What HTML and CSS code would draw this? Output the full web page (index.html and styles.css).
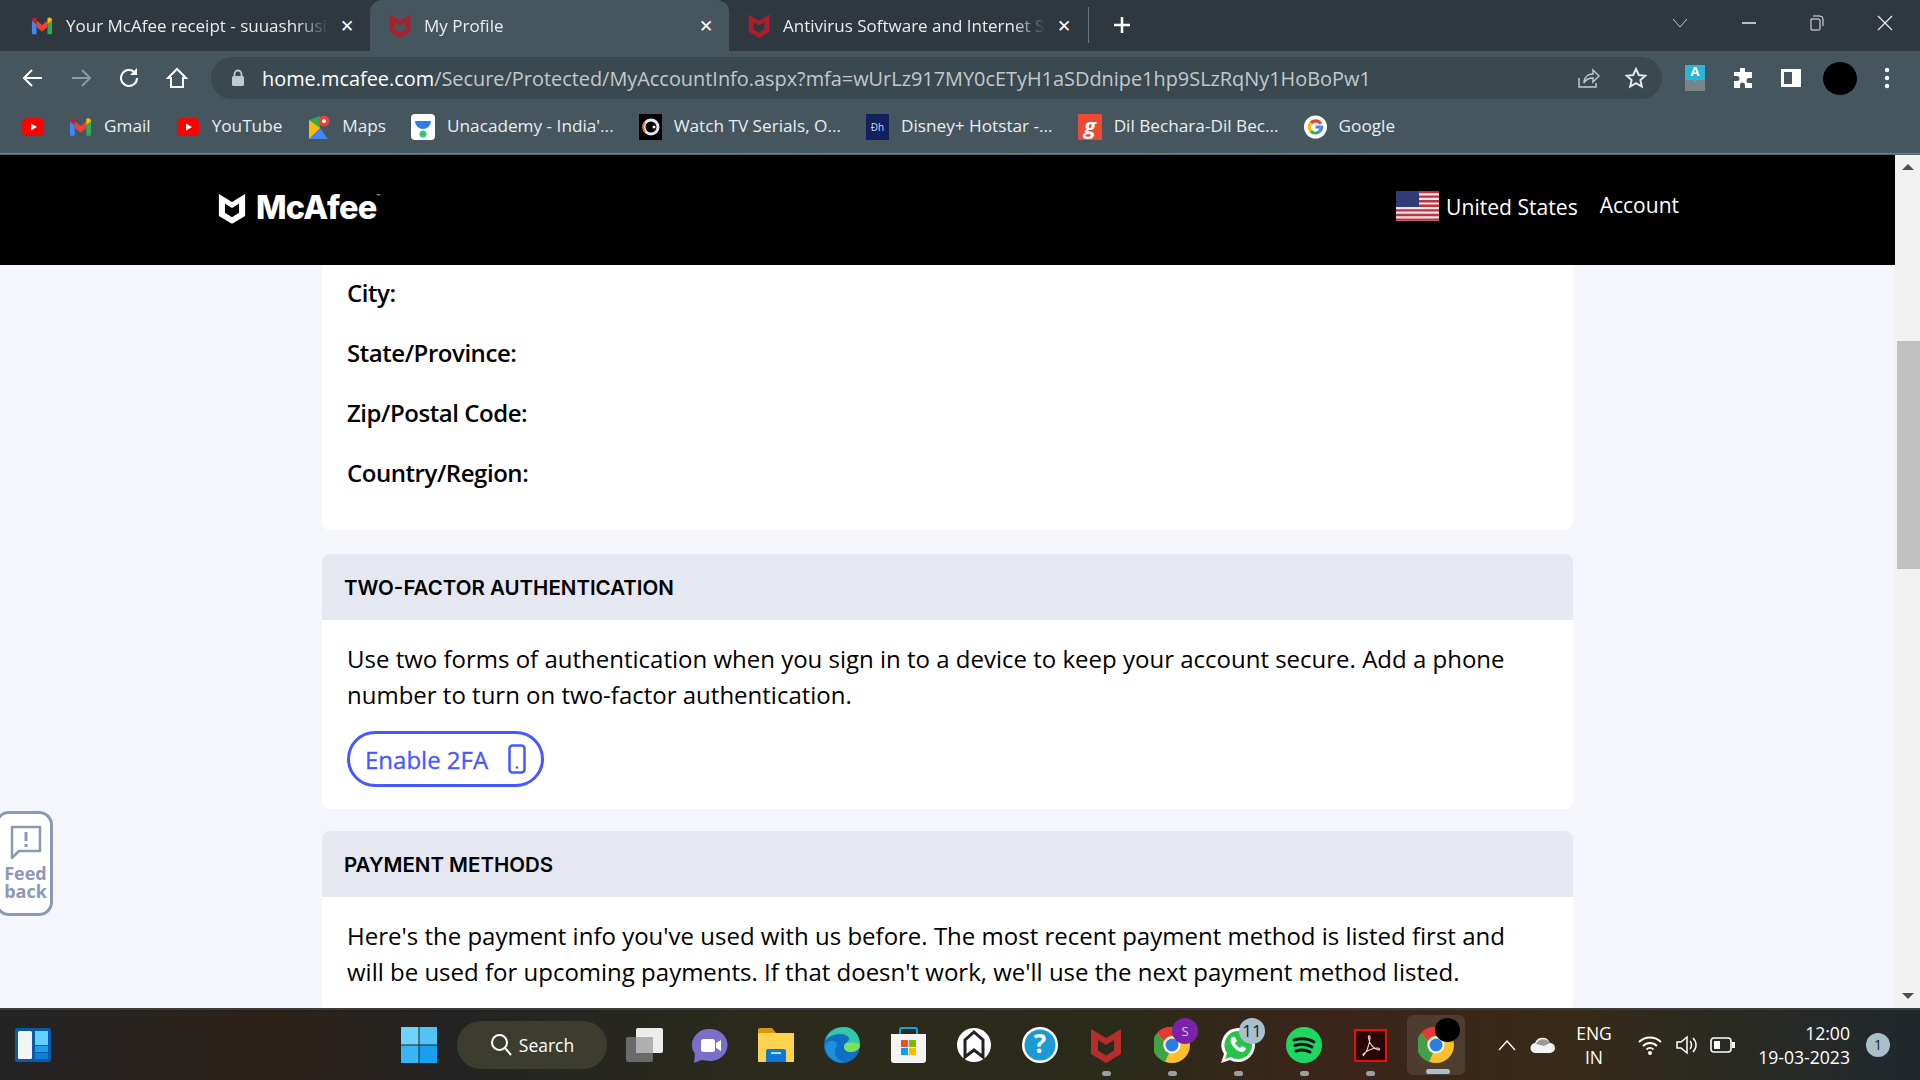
FILE: index.html
```html
<!DOCTYPE html>
<html lang="en">
<head>
    <meta charset="UTF-8">
    <title>My Profile</title>
    <link rel="stylesheet" href="styles.css">
</head>
<body>
    <!-- shared icons -->
    <svg class="defs" width="0" height="0">
        <symbol id="shield" viewBox="0 0 32 36"><path d="M1 2l15 9 15-9v25l-15 9-15-9z M8 13v10.500l8 5 8-5V13l-8 5z" fill="currentColor" fill-rule="evenodd"/></symbol>
        <symbol id="yt" viewBox="0 0 24 24"><rect x="1" y="3" width="22" height="18" rx="5" fill="#f00"/><path d="M10 8.500l6 3.500-6 3.500z" fill="#fff"/></symbol>
        <symbol id="gmail" viewBox="0 0 24 20"><path d="M1 4v14a1 1 0 0 0 1 1h4V8z" fill="#4285f4"/><path d="M23 4v14a1 1 0 0 1-1 1h-4V8z" fill="#34a853"/><path d="M6 11V4l6 5 6-5v7l-6 5z" fill="#ea4335"/><path d="M1 4c0-3 3-4 5-2.500V8z" fill="#c5221f"/><path d="M23 4c0-3-3-4-5-2.500V8z" fill="#fbbc04"/></symbol>
        <symbol id="chrome" viewBox="0 0 36 36"><circle cx="18" cy="18" r="18" fill="#fbc02d"/><path d="M18 0a18 18 0 0 1 15.600 9H18a9 9 0 0 0-8 5L3 6A18 18 0 0 1 18 0z" fill="#e53935"/><path d="M3 6l7 8a9 9 0 0 0 5 12l-4 9A18 18 0 0 1 3 6z" fill="#43a047"/><circle cx="18" cy="18" r="8.500" fill="#fff"/><circle cx="18" cy="18" r="6.500" fill="#2a7de1"/></symbol>
    </svg>

    <div class="tabstrip">
        <div class="tab">
            <svg class="tab-icon" width="22" height="20"><use href="#gmail"/></svg>
            <span class="tab-title">Your McAfee receipt - suuashrusi</span>
            <span class="tab-close">✕</span>
        </div>
        <div class="tab tab-active">
            <svg class="tab-icon tab-shield" width="22" height="25"><use href="#shield"/></svg>
            <span class="tab-title">My Profile</span>
            <span class="tab-close">✕</span>
        </div>
        <div class="tab">
            <svg class="tab-icon tab-shield" width="22" height="25"><use href="#shield"/></svg>
            <span class="tab-title">Antivirus Software and Internet S</span>
            <span class="tab-close">✕</span>
        </div>
        <div class="new-tab">
            <svg width="18" height="18" viewBox="0 0 18 18"><path d="M9 1v16M1 9h16" stroke="#fff" stroke-width="2.500"/></svg>
        </div>
        <div class="win-controls">
            <svg width="18" height="12" viewBox="0 0 18 12"><path d="M2 2l7 8 7-8" fill="none" stroke="#c8d0d4" stroke-width="1"/></svg>
            <svg width="16" height="12" viewBox="0 0 16 12"><path d="M1 6h14" stroke="#e8ecee" stroke-width="1.500"/></svg>
            <svg width="16" height="16" viewBox="0 0 16 16"><path d="M4 1h7a3 3 0 0 1 3 3v7M2 4h8a1 1 0 0 1 1 1v9a1 1 0 0 1-1 1H2z" fill="none" stroke="#e8ecee" stroke-width="1"/></svg>
            <svg width="16" height="16" viewBox="0 0 16 16"><path d="M1 1l14 14M15 1L1 15" stroke="#e8ecee" stroke-width="1.200"/></svg>
        </div>
    </div>

    <div class="toolbar">
        <div class="nav-btns">
            <svg width="24" height="24" viewBox="0 0 24 24"><path d="M21 12H4M11 4l-8 8 8 8" fill="none" stroke="#fff" stroke-width="2"/></svg>
            <svg width="24" height="24" viewBox="0 0 24 24"><path d="M3 12h17M13 4l8 8-8 8" fill="none" stroke="#8e9a9f" stroke-width="2"/></svg>
            <svg width="24" height="24" viewBox="0 0 24 24"><path d="M20 12a8 8 0 1 1-2.500-5.800" fill="none" stroke="#fff" stroke-width="2"/><path d="M20 2v7h-7z" fill="#fff"/></svg>
            <svg width="24" height="24" viewBox="0 0 24 24"><path d="M12 3L3 12h3v9h12v-9h3z" fill="none" stroke="#fff" stroke-width="2"/></svg>
        </div>
        <div class="omnibox">
            <svg class="lock" width="14" height="18" viewBox="0 0 14 18"><path d="M3.500 8V5a3.500 3.500 0 0 1 7 0v3" fill="none" stroke="#c2c9cc" stroke-width="1.800"/><rect x="1" y="7" width="12" height="10" rx="1.500" fill="#c2c9cc"/></svg>
            <span class="url"><span class="url-host">home.mcafee.com</span>/Secure/Protected/MyAccountInfo.aspx?mfa=wUrLz917MY0cETyH1aSDdnipe1hp9SLzRqNy1HoBoPw1</span>
            <svg class="omni-share" width="24" height="24" viewBox="0 0 24 24"><path d="M3 12v9h17v-4M8 17c0-6 4-9 9-9V4l6 6-6 6v-4c-4 0-7 1-9 5z" fill="none" stroke="#c2c9cc" stroke-width="1.500"/></svg>
            <svg class="omni-star" width="24" height="24" viewBox="0 0 24 24"><path d="M12 3l2.800 6 6.400.700-4.800 4.300 1.400 6.500L12 17.200 6.200 20.500l1.400-6.500L2.800 9.700 9.200 9z" fill="none" stroke="#e2e6e8" stroke-width="2"/></svg>
        </div>
        <div class="ext-btns">
            <svg width="22" height="26" viewBox="0 0 22 26"><rect x="1" y="0" width="20" height="15" fill="#29b6d6"/><rect x="1" y="15" width="20" height="11" fill="#78838a"/><path d="M7 12h8l-4 6z" fill="#29b6d6"/><text x="11" y="11" class="ext-a">A</text></svg>
            <svg width="24" height="24" viewBox="0 0 24 24"><path d="M9 2h5v4h7v6h-3a2.500 2.500 0 0 0 0 5h3v5h-7v-3a2.500 2.500 0 0 0-5 0v3H3v-7h3a2.500 2.500 0 0 0 0-5H3V6h6z" fill="#fff"/></svg>
            <svg width="22" height="20" viewBox="0 0 22 20"><path d="M1 1h20v18H1z M4 4v12h8V4z" fill="#fff" fill-rule="evenodd"/></svg>
            <span class="avatar"></span>
            <svg class="menu-dots" width="6" height="22" viewBox="0 0 6 22"><circle cx="3" cy="3" r="2.200" fill="#fff"/><circle cx="3" cy="11" r="2.200" fill="#fff"/><circle cx="3" cy="19" r="2.200" fill="#fff"/></svg>
        </div>
    </div>

    <div class="bookmarks">
        <div class="bm bm-tight"><svg width="24" height="24"><use href="#yt"/></svg></div>
        <div class="bm"><svg width="23" height="20"><use href="#gmail"/></svg><span>Gmail</span></div>
        <div class="bm"><svg width="24" height="24"><use href="#yt"/></svg><span>YouTube</span></div>
        <div class="bm">
            <svg width="23" height="26" viewBox="0 0 23 26"><path d="M2 6l11-4v12L2 25z" fill="#34a853"/><path d="M2 25l11-11 8 11z" fill="#4285f4"/><path d="M2 6l11 8-11 11z" fill="#fbbc04"/><circle cx="17" cy="7" r="5.500" fill="#ea4335"/><circle cx="17" cy="7" r="2" fill="#fff"/></svg>
            <span>Maps</span>
        </div>
        <div class="bm">
            <svg width="24" height="26" viewBox="0 0 24 26"><rect width="24" height="26" rx="4" fill="#fff"/><path d="M4 7h16a8 8 0 0 1-16 0z" fill="#2f7fe0"/><circle cx="12" cy="20" r="3.500" fill="#35c27d"/></svg>
            <span>Unacademy - India'...</span>
        </div>
        <div class="bm">
            <svg width="23" height="26" viewBox="0 0 23 26"><rect width="23" height="26" fill="#000"/><circle cx="12" cy="13" r="7" fill="none" stroke="#e8e8e8" stroke-width="3"/><path d="M6 8a8 8 0 0 0 0 10" fill="none" stroke="#e2762c" stroke-width="2"/><circle cx="15" cy="13" r="1.500" fill="#fff"/></svg>
            <span>Watch TV Serials, O...</span>
        </div>
        <div class="bm">
            <svg width="23" height="26" viewBox="0 0 23 26"><rect width="23" height="26" fill="#12205e"/><text x="11.500" y="17" class="bm-dh">Ðh</text></svg>
            <span>Disney+ Hotstar -...</span>
        </div>
        <div class="bm">
            <svg width="24" height="26" viewBox="0 0 24 26"><rect width="24" height="26" fill="#ec4a35"/><text x="12" y="20" class="bm-g">g</text></svg>
            <span>Dil Bechara-Dil Bec...</span>
        </div>
        <div class="bm">
            <svg width="23" height="24" viewBox="0 0 24 24"><circle cx="12" cy="12" r="12" fill="#fff"/><path d="M19 8a8 8 0 0 0-13-1.500L8.500 9A4.500 4.500 0 0 1 16 9.500z" fill="#ea4335"/><path d="M6 6.500a8 8 0 0 0 0 11L8.500 15a4.500 4.500 0 0 1 0-6z" fill="#fbbc05"/><path d="M6 17.500a8 8 0 0 0 11 .500l-2.500-2A4.500 4.500 0 0 1 8.500 15z" fill="#34a853"/><path d="M12 10.500h8a8 8 0 0 1-3 7.500l-2.500-2a4 4 0 0 0 1.500-2.500H12z" fill="#4285f4"/></svg>
            <span>Google</span>
        </div>
    </div>

    <div class="viewport">
        <div class="page">
            <header class="site-header">
                <div class="logo">
                    <svg class="logo-shield" width="28" height="32"><use href="#shield"/></svg>
                    <span class="logo-text">McAfee<sup class="tm">™</sup></span>
                </div>
                <div class="header-links">
                    <svg class="flag" width="43" height="30" viewBox="0 0 43 30">
                        <rect width="43" height="30" fill="#e8e8ee"/>
                        <path d="M0 1h43M0 5.600h43M0 10.200h43M0 14.800h43M0 19.400h43M0 24h43M0 28.600h43" stroke="#c2313f" stroke-width="2.400"/>
                        <rect width="23" height="16" fill="#323c76"/>
                    </svg>
                    <a class="country">United States</a>
                    <a class="account">Account</a>
                </div>
            </header>

            <main class="content">
                <section class="card card-address">
                    <div class="field">City:</div>
                    <div class="field">State/Province:</div>
                    <div class="field">Zip/Postal Code:</div>
                    <div class="field">Country/Region:</div>
                </section>

                <section class="card">
                    <h2 class="card-head">TWO-FACTOR AUTHENTICATION</h2>
                    <div class="card-body">
                        <p>Use two forms of authentication when you sign in to a device to keep your account secure. Add a phone number to turn on two-factor authentication.</p>
                        <button class="btn-2fa">Enable 2FA
                            <svg width="18" height="30" viewBox="0 0 18 30"><rect x="1.500" y="1.500" width="15" height="27" rx="3" fill="none" stroke="#4659ff" stroke-width="2.500"/><circle cx="9" cy="23.500" r="1.300" fill="#4659ff"/></svg>
                        </button>
                    </div>
                </section>

                <section class="card">
                    <h2 class="card-head">PAYMENT METHODS</h2>
                    <div class="card-body">
                        <p>Here's the payment info you've used with us before. The most recent payment method is listed first and will be used for upcoming payments. If that doesn't work, we'll use the next payment method listed.</p>
                    </div>
                </section>
            </main>

            <div class="feedback">
                <svg width="32" height="34" viewBox="0 0 32 34"><path d="M2 2h28v24H9l-7 7z" fill="none" stroke="#8c98b5" stroke-width="2.500" stroke-linejoin="round"/><path d="M16 7v9M16 19v3" stroke="#8c98b5" stroke-width="3"/></svg>
                <span class="feedback-label">Feed<br>back</span>
            </div>
        </div>

        <div class="scrollbar">
            <span class="arrow-up"></span>
            <div class="scroll-track"><div class="scroll-thumb"></div></div>
            <span class="arrow-down"></span>
        </div>
    </div>

    <footer class="taskbar">
        <svg class="widgets" width="36" height="34" viewBox="0 0 36 34"><rect width="36" height="34" rx="2" fill="#0a5aa8"/><rect x="3" y="3" width="14" height="28" rx="1.500" fill="#f2f5f8"/><rect x="20" y="3" width="13" height="14" fill="#62d0ff"/><rect x="20" y="18" width="13" height="6" fill="#1b9df0"/><rect x="20" y="25" width="13" height="6" fill="#0d7fd6"/></svg>

        <div class="task-center">
            <svg class="start" width="36" height="36" viewBox="0 0 36 36"><rect width="17.500" height="17.500" fill="#6fd3fb"/><rect x="18.500" width="17.500" height="17.500" fill="#52c3f7"/><rect y="18.500" width="17.500" height="17.500" fill="#3ab4f5"/><rect x="18.500" y="18.500" width="17.500" height="17.500" fill="#18a0f0"/></svg>
            <div class="search-pill">
                <svg width="22" height="24" viewBox="0 0 22 24"><circle cx="9.500" cy="9.500" r="7.500" fill="none" stroke="#fff" stroke-width="2"/><path d="M15 15l6 7" stroke="#fff" stroke-width="2"/></svg>
                <span>Search</span>
            </div>
            <div class="task-icons">
                <div class="ti"><svg width="37" height="34" viewBox="0 0 37 34"><rect y="9" width="27" height="25" rx="2" fill="#6a6a6a"/><rect x="10" width="27" height="25" rx="2" fill="#ededed"/><rect x="10" y="9" width="17" height="16" fill="#b0b0b0"/></svg></div>
                <div class="ti"><svg width="35" height="35" viewBox="0 0 35 35"><path d="M17.500 1a17 16 0 0 1 0 32c-3 0-6-1-9-1L1 35l1-9A17 16 0 0 1 17.500 1z" fill="#7a70cc"/><rect x="8" y="11" width="14" height="13" rx="2.500" fill="#fff"/><path d="M23 15l5-3v11l-5-3z" fill="#fff"/></svg></div>
                <div class="ti"><svg width="36" height="34" viewBox="0 0 36 34"><path d="M0 2a2 2 0 0 1 2-2h12l4 5h18v29H0z" fill="#d9990d"/><rect y="5" width="36" height="29" rx="1" fill="#ffd250"/><path d="M8 34V23a2 2 0 0 1 2-2h16a2 2 0 0 1 2 2v11z" fill="#0f78d4"/><rect x="13" y="24" width="10" height="2" fill="#a8d8f8"/></svg></div>
                <div class="ti"><svg width="36" height="36" viewBox="0 0 36 36"><circle cx="18" cy="18" r="18" fill="#0f6fc6"/><path d="M1 14C4 3 14 0 20 0c9 0 16 7 16 18 0 4-4 7-9 7-4 0-7-2-7-5 0-4 5-5 5-8 0-3-4-5-9-5-7 0-12 3-15 7z" fill="#35c8a5"/><path d="M36 18c0 4-4 7-9 7-4 0-7-2-7-5 0-2 1-3 2-4 5-1 12-1 14 2z" fill="#7be05a"/><path d="M13 19a9 9 0 0 0 14 12c-4 3-9 5-13 4-8-2-13-9-13-17 2-4 6-5 9-4 2 1 3 3 3 5z" fill="#1b8fe0"/></svg></div>
                <div class="ti"><svg width="35" height="36" viewBox="0 0 35 36"><path d="M9 8V3a2 2 0 0 1 2-2h13a2 2 0 0 1 2 2v5" fill="none" stroke="#1ba1e2" stroke-width="2"/><path d="M0 7h35v26a3 3 0 0 1-3 3H3a3 3 0 0 1-3-3z" fill="#f4f4f4"/><rect x="10" y="13" width="7" height="7" fill="#f25022"/><rect x="18" y="13" width="7" height="7" fill="#7fba00"/><rect x="10" y="21" width="7" height="7" fill="#00a4ef"/><rect x="18" y="21" width="7" height="7" fill="#ffb900"/></svg></div>
                <div class="ti"><svg width="36" height="36" viewBox="0 0 36 36"><circle cx="18" cy="18" r="17" fill="#fff"/><path d="M18 5l9 8v17l-9-7-9 7V13z" fill="none" stroke="#222" stroke-width="3"/></svg></div>
                <div class="ti"><svg width="36" height="36" viewBox="0 0 36 36"><circle cx="18" cy="18" r="18" fill="#fff"/><circle cx="18" cy="18" r="15.500" fill="#1b9ad6"/><text x="18" y="26" class="help-q">?</text></svg></div>
                <div class="ti ti-open"><svg class="task-shield" width="32" height="36"><use href="#shield"/></svg></div>
                <div class="ti ti-open">
                    <svg width="36" height="36"><use href="#chrome"/></svg>
                    <span class="ti-badge badge-s">S</span>
                </div>
                <div class="ti ti-open">
                    <svg width="36" height="36" viewBox="0 0 36 36"><path d="M18 1a17 17 0 0 1 0 34c-3 0-6-1-8-2l-9 3 3-9a17 17 0 0 1 14-26z" fill="#fff"/><path d="M18 4a14 14 0 0 1 0 28c-3 0-5-1-7-2l-6 2 2-6A14 14 0 0 1 18 4z" fill="#29c34a"/><path d="M12 10c-2 2-2 5 0 8s6 7 10 7c2 0 4-2 4-4l-4-2-2 2c-2-1-4-3-5-5l2-2-2-4z" fill="#fff"/></svg>
                    <span class="ti-badge badge-wa">11</span>
                </div>
                <div class="ti ti-open"><svg width="36" height="36" viewBox="0 0 36 36"><circle cx="18" cy="18" r="18" fill="#1ed760"/><path d="M8 13c7-2 14-2 20 2M9 18.500c6-2 12-1.500 17 1.500M10 24c5-1.500 10-1 14 1" fill="none" stroke="#111" stroke-width="3" stroke-linecap="round"/></svg></div>
                <div class="ti ti-open"><svg width="33" height="33" viewBox="0 0 33 33"><rect x="1" y="1" width="31" height="31" fill="#2b0606" stroke="#e0110f" stroke-width="2"/><path d="M9 27c3-3 6-10 7-18 .3-3-2-3-1.500 0 1 6 5 11 10 12 2 0 1-2-1-2-5 0-12 3-15 7" fill="none" stroke="#e6d0d0" stroke-width="1.200"/></svg></div>
                <div class="ti ti-active">
                    <svg width="36" height="36"><use href="#chrome"/></svg>
                    <span class="blob"></span>
                </div>
            </div>
        </div>

        <div class="tray">
            <svg class="tray-chevron" width="18" height="12" viewBox="0 0 18 12"><path d="M1 11l8-9 8 9" fill="none" stroke="#fff" stroke-width="1.300"/></svg>
            <svg class="tray-cloud" width="26" height="18" viewBox="0 0 26 18"><path d="M6 17a5 5 0 0 1-1-10 8 8 0 0 1 15 0 5 5 0 0 1 0 10z" fill="#f4f4f4"/><path d="M6 8a8 8 0 0 1 14-1l-6 3z" fill="#9a9a9a"/></svg>
            <div class="lang">ENG<br>IN</div>
            <svg class="tray-wifi" width="24" height="22" viewBox="0 0 24 22"><path d="M1 8c6-6 16-6 22 0M5 12c4-4 10-4 14 0M8.500 15.500c2-2 5-2 7 0" fill="none" stroke="#fff" stroke-width="1.800"/><circle cx="12" cy="19" r="2" fill="#fff"/></svg>
            <svg class="tray-vol" width="24" height="22" viewBox="0 0 24 22"><path d="M2 8h4l6-5v16l-6-5H2z" fill="none" stroke="#fff" stroke-width="1.500"/><path d="M15 7c2 2 2 6 0 8M18 4c4 4 4 10 0 14" fill="none" stroke="#fff" stroke-width="1.500"/></svg>
            <svg class="tray-batt" width="25" height="16" viewBox="0 0 25 16"><rect x="1" y="1" width="20" height="14" rx="3" fill="none" stroke="#fff" stroke-width="1.600"/><rect x="4" y="4" width="6" height="8" fill="#fff"/><rect x="22" y="5" width="3" height="6" fill="#fff"/></svg>
            <div class="clock"><span>12:00</span><span>19-03-2023</span></div>
            <span class="notif">1</span>
        </div>
    </footer>
</body>
</html>
```

FILE: styles.css
```css
* {
    box-sizing: border-box;
}
html, body {
    height: 100%;
}
body {
    margin: 0;
    font-family: "Open Sans", sans-serif;
    display: flex;
    flex-direction: column;
    height: 1080px;
    overflow: hidden;
    color: #000;
}
.defs {
    position: absolute;
}
.ext-btns svg, .bm svg, .ti svg {
    overflow: visible;
}

/* browser chrome */
.tabstrip {
    height: 51px;
    background-color: #2e383e;
    display: flex;
    align-items: flex-end;
    padding-left: 12px;
    color: #fff;
    flex-shrink: 0;
}
.tab {
    width: 358px;
    height: 51px;
    display: flex;
    align-items: center;
    padding: 0 13px 0 19px;
    font-size: 17px;
}
.tab-active {
    background-color: #46565f;
    border-radius: 12px 12px 0 0;
    width: 359px;
}
.tab-icon {
    flex-shrink: 0;
    margin-right: 13px;
}
.tab-shield {
    color: #a8202c;
}
.tab-title {
    flex: 1;
    min-width: 0;
    white-space: nowrap;
    color: #e9edef;
    -webkit-mask-image: linear-gradient(90deg, #000 85%, transparent 97%);
    mask-image: linear-gradient(90deg, #000 85%, transparent 97%);
}
.tab-close {
    width: 20px;
    font-size: 17px;
    font-weight: 700;
    line-height: 20px;
    text-align: center;
    font-family: "DejaVu Sans", sans-serif;
}
.new-tab {
    height: 36px;
    margin-bottom: 8px;
    margin-left: 1px;
    padding-left: 24px;
    border-left: 1px solid #6b767c;
    display: flex;
    align-items: center;
}
.win-controls {
    margin-left: auto;
    height: 51px;
    padding-bottom: 6px;
    display: flex;
    align-items: center;
    gap: 52px;
    padding-right: 27px;
}
.toolbar {
    height: 54px;
    background-color: #46565f;
    display: flex;
    align-items: center;
    padding: 0 0 0 21px;
    flex-shrink: 0;
}
.nav-btns {
    display: flex;
    gap: 24px;
    width: 190px;
}
.omnibox {
    width: 1451px;
    height: 42px;
    border-radius: 21px;
    background-color: #3a4850;
    display: flex;
    align-items: center;
    padding-left: 20px;
    color: #c2c9cc;
}
.lock {
    margin-right: 17px;
    flex-shrink: 0;
}
.url {
    font-size: 19.900px;
    white-space: nowrap;
    flex: 1;
    min-width: 0;
}
.url-host {
    color: #fff;
}
.omni-share {
    margin-right: 24px;
    flex-shrink: 0;
}
.omni-star {
    margin-right: 14px;
    flex-shrink: 0;
}
.ext-btns {
    display: flex;
    align-items: center;
    margin-left: 22px;
    gap: 25px;
}
.ext-a {
    font-size: 13px;
    font-weight: 700;
    fill: #fff;
    text-anchor: middle;
}
.avatar {
    width: 34px;
    height: 33px;
    border-radius: 50%;
    background-color: #000;
    margin-left: -4px;
}
.menu-dots {
    margin-left: 2px;
}
.bookmarks {
    height: 49px;
    background-color: #46565f;
    border-bottom: 1px solid #6f8088;
    display: flex;
    align-items: center;
    padding: 0 0 5px 21px;
    gap: 25px;
    font-size: 17.200px;
    color: #e9edef;
    flex-shrink: 0;
}
.bm {
    display: flex;
    align-items: center;
    gap: 12px;
    white-space: nowrap;
}
.bm span {
    margin-top: -3px;
}
.bm-tight {
    margin-right: -1px;
}
.bm-dh {
    font-size: 10px;
    fill: #cfd6f0;
    text-anchor: middle;
}
.bm-g {
    font-size: 22px;
    font-weight: 700;
    font-style: italic;
    fill: #fff;
    text-anchor: middle;
}

/* page */
.viewport {
    flex: 1;
    display: flex;
    min-height: 0;
    border-top: 1px solid #55666f;
}
.page {
    flex: 1;
    background-color: #f4f6fb;
    overflow: hidden;
    position: relative;
}
.site-header {
    height: 110px;
    background-color: #000;
    color: #fff;
    display: flex;
    align-items: center;
    justify-content: space-between;
    padding: 0 216px 0 218px;
}
.logo {
    display: flex;
    align-items: center;
    gap: 10px;
    padding-bottom: 4px;
}
.logo-shield {
    color: #fff;
}
.logo-text {
    font-family: "Inter", sans-serif;
    font-size: 32.500px;
    font-weight: 800;
    line-height: 1;
    letter-spacing: -0.8px;
}
.tm {
    font-size: 6px;
    font-weight: 400;
    vertical-align: 20px;
    line-height: 0;
}
.header-links {
    display: flex;
    align-items: center;
    font-size: 21px;
    padding-bottom: 14px;
}
.flag {
    margin-right: 7px;
    margin-top: 6px;
}
.country {
    margin-right: 22px;
    padding-top: 6px;
    font-size: 21.100px;
}
.account {
    padding-top: 4px;
}
.content {
    width: 1251px;
    margin: 0 auto;
}
.card {
    background-color: #fff;
    border-radius: 8px;
    margin-bottom: 22px;
    overflow: hidden;
}
.card-address {
    border-radius: 0 0 8px 8px;
    padding: 10px 25px 39px;
    margin-bottom: 24px;
}
.field {
    font-size: 24px;
    font-weight: 600;
    letter-spacing: -0.45px;
    line-height: 36px;
    margin-bottom: 24px;
}
.field:last-child {
    margin-bottom: 0;
}
.card-head {
    margin: 0;
    height: 66px;
    background-color: #e5e8f1;
    font-family: "Inter", sans-serif;
    font-size: 20.500px;
    font-weight: 600;
    line-height: 67px;
    padding-left: 22px;
}
.card-body {
    padding: 21px 43px 22px 25px;
}
.card-body p {
    margin: 0;
    font-size: 24px;
    line-height: 36px;
}
.btn-2fa {
    margin-top: 18px;
    width: 197px;
    height: 56px;
    border: 3px solid #4659ff;
    border-radius: 28px;
    background-color: #fff;
    color: #4659ff;
    font-family: "Open Sans", sans-serif;
    font-size: 24px;
    -webkit-text-stroke: 0.3px #4659ff;
    display: flex;
    align-items: center;
    justify-content: space-between;
    padding: 0 15px;
}
.feedback {
    position: absolute;
    left: -5px;
    top: 656px;
    width: 58px;
    height: 105px;
    border: 3px solid #8c98b5;
    border-radius: 14px;
    background-color: #fff;
    color: #8c98b5;
    font-size: 18px;
    font-weight: 700;
    line-height: 18px;
    text-align: center;
    padding-top: 11px;
    padding-left: 3px;
}
.feedback svg {
    display: block;
    margin: 0 auto 5px;
}
.feedback-label {
    display: block;
}
.scrollbar {
    width: 25px;
    background-color: #f1f1f1;
    display: flex;
    flex-direction: column;
    align-items: center;
}
.scroll-track {
    flex: 1;
    width: 100%;
    padding-top: 171px;
}
.scroll-thumb {
    margin-left: 2px;
    height: 228px;
    background-color: #c1c1c1;
}
.arrow-up, .arrow-down {
    width: 0;
    height: 0;
    border-left: 6px solid transparent;
    border-right: 6px solid transparent;
}
.arrow-up {
    margin-top: 9px;
    border-bottom: 6px solid #505050;
}
.arrow-down {
    margin-bottom: 9px;
    border-top: 6px solid #505050;
}

/* windows taskbar */
.taskbar {
    height: 72px;
    flex-shrink: 0;
    display: flex;
    align-items: center;
    padding-left: 15px;
    border-top: 2px solid #3c3c3c;
    background: linear-gradient(90deg, #242424 0, #2c2119 14%, #232323 24%, #2b2a1c 40%, #2b2b1a 58%, #3c2419 70%, #382a18 82%, #2c2a20 88%, #20282d 100%);
    color: #fff;
}
.widgets {
    flex-shrink: 0;
}
.task-center {
    display: flex;
    align-items: center;
    margin-left: 350px;
}
.search-pill {
    margin-left: 20px;
    width: 150px;
    height: 48px;
    border-radius: 24px;
    background-color: #3c3d2f;
    display: flex;
    align-items: center;
    justify-content: center;
    gap: 7px;
    font-size: 17.500px;
}
.task-icons {
    display: flex;
    margin-left: 4px;
}
.ti {
    width: 66px;
    height: 60px;
    display: flex;
    align-items: center;
    justify-content: center;
    position: relative;
}
.task-shield {
    color: #b52d2d;
}
.ti-open::after {
    content: "";
    position: absolute;
    left: 50%;
    bottom: -1px;
    width: 9px;
    height: 5px;
    margin-left: -4px;
    border-radius: 3px;
    background-color: #9aa0a3;
}
.ti-active {
    width: 58px;
    margin-left: 4px;
    border-radius: 6px;
    background-color: rgba(255, 255, 255, 0.1);
}
.ti-active::after {
    content: "";
    position: absolute;
    left: 19px;
    bottom: 1px;
    width: 24px;
    height: 5px;
    border-radius: 3px;
    background-color: #a9c0ca;
}
.ti-badge {
    position: absolute;
    top: 3px;
    width: 26px;
    height: 26px;
    border-radius: 50%;
    font-size: 13px;
    line-height: 26px;
    text-align: center;
}
.badge-s {
    right: 7px;
    background-color: #7a22a8;
    color: #d8c0e8;
}
.badge-wa {
    right: 6px;
    background-color: #a9c0ca;
    color: #1c2328;
    font-size: 17px;
}
.blob {
    position: absolute;
    top: 3px;
    right: 5px;
    width: 25px;
    height: 24px;
    border-radius: 50%;
    background-color: #000;
}
.help-q {
    font-size: 26px;
    font-weight: 700;
    fill: #fff;
    text-anchor: middle;
}
.tray {
    display: flex;
    align-items: center;
    margin-left: 33px;
    flex-shrink: 0;
}
.tray-chevron {
    margin-right: 14px;
}
.tray-cloud {
    margin-right: 16px;
}
.lang {
    width: 44px;
    font-size: 17.500px;
    line-height: 24px;
    text-align: center;
    margin-right: 22px;
}
.tray-wifi {
    margin-right: 13px;
}
.tray-vol {
    margin-right: 11px;
}
.tray-batt {
    margin-right: 13px;
}
.clock {
    width: 102px;
    display: flex;
    flex-direction: column;
    align-items: flex-end;
    font-size: 17.600px;
    line-height: 24px;
    white-space: nowrap;
}
.notif {
    margin-left: 16px;
    width: 24px;
    height: 24px;
    border-radius: 50%;
    background-color: #a9c0ca;
    color: #1c2328;
    font-size: 14px;
    line-height: 24px;
    text-align: center;
}
```
